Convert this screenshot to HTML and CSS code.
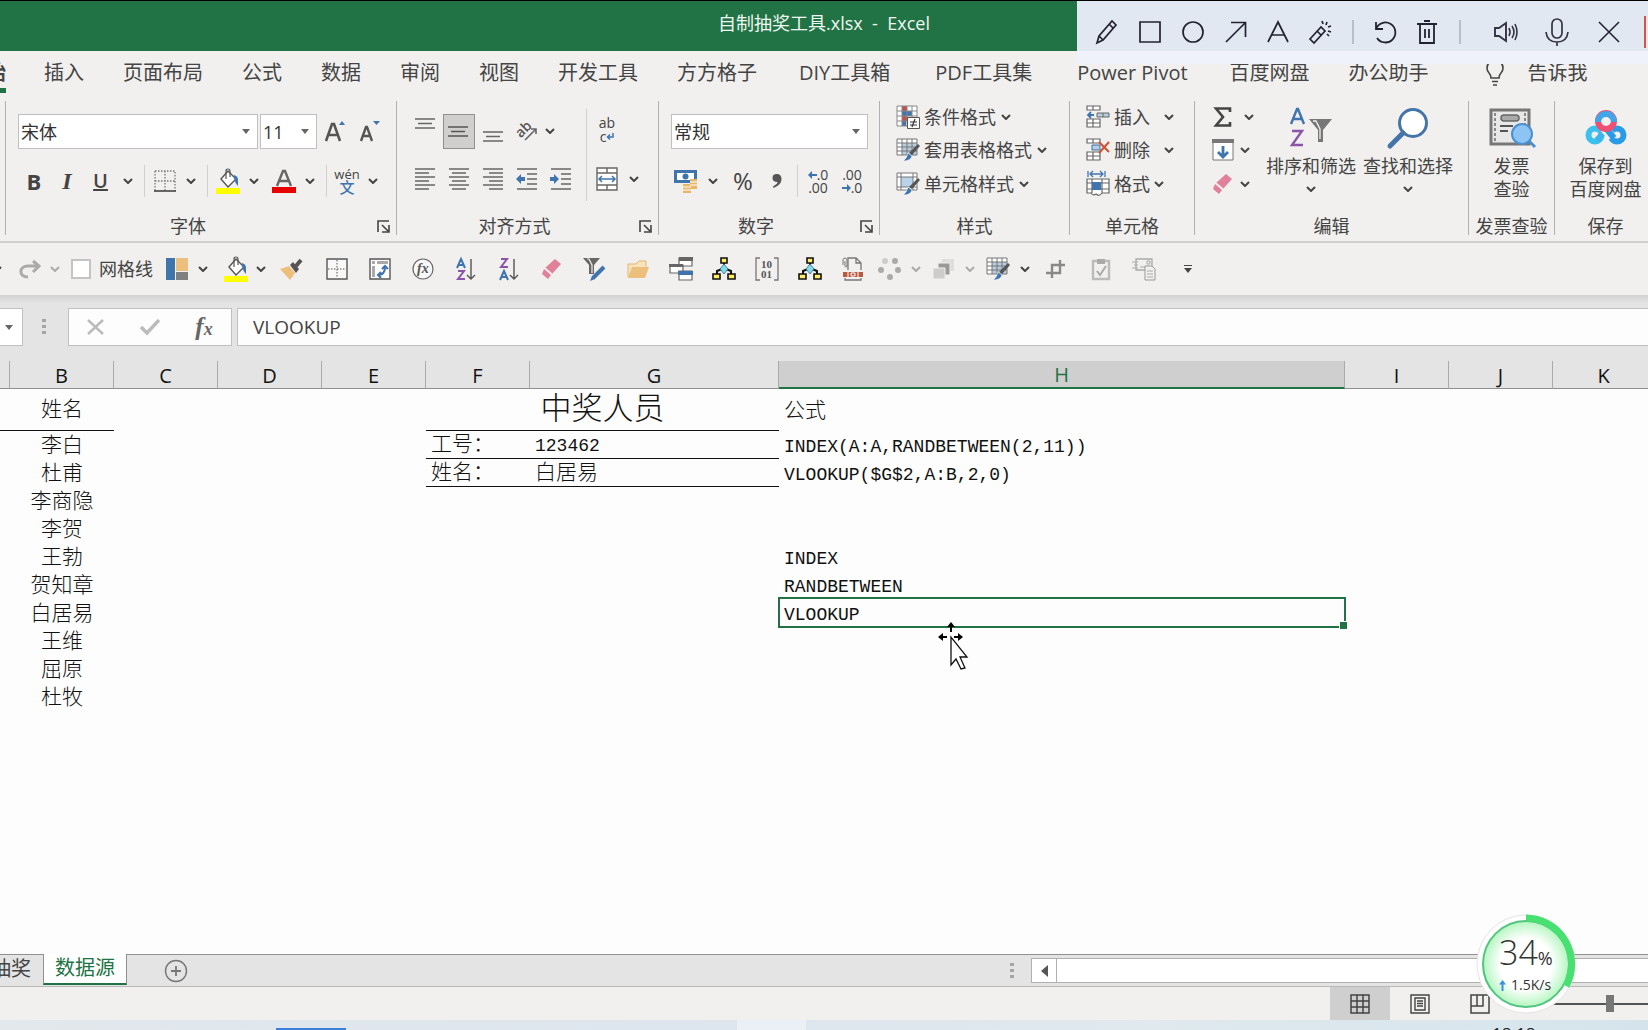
FILE: index.html
```
<!DOCTYPE html>
<html lang="zh-CN">
<head>
<meta charset="utf-8">
<title>自制抽奖工具.xlsx - Excel</title>
<link rel="stylesheet" href="styles.css">
</head>
<body>
<svg class="sprite" aria-hidden="true">
  <symbol id="chev" viewBox="0 0 10 6"><path d="M1 1l4 4 4-4" fill="none" stroke="currentColor" stroke-width="2"/></symbol>
  <symbol id="tri" viewBox="0 0 8 5"><path d="M0 0h8L4 5z" fill="#666"/></symbol>
  <symbol id="launch" viewBox="0 0 14 14"><path d="M1 12V1h11M5 5l6 6M12 5v7H5" fill="none" stroke="#444" stroke-width="1.6"/></symbol>
  <symbol id="bucket" viewBox="0 0 24 26"><path d="M5 11l7-8 8 8-8 8z" fill="#fff" stroke="#555" stroke-width="1.4"/><path d="M10 11V3q0-2 2-2t2 2v6" fill="none" stroke="#555" stroke-width="1.2"/><path d="M18 7q4 1 4 5v6q-3-3-4-8z" fill="#3f74ad"/><path d="M0 20h24v6H0z" fill="#ff0"/></symbol>
  <symbol id="eraser" viewBox="0 0 22 22"><path d="M14 1l6 5-9 10-7-6z" fill="#e0809a"/><path d="M3 11l7 6-3 4-6-5z" fill="#e0809a"/><path d="M4 10l7 6" stroke="#f1f0ef" stroke-width="1.2"/></symbol>
  <symbol id="tablebrush" viewBox="0 0 24 24"><path d="M1 1h20v16H1z" fill="#fff"/><path d="M6 5h15v12H6z" fill="#b9cde0"/><path d="M1 1h20v16H1zM1 5h20M1 9h20M1 13h20M6 1v16M11 1v16M16 1v16" fill="none" stroke="#777"/><path d="M22 6l2 2-8 9-3-2z" fill="#555"/><path d="M12 15l4 3q-1 5-9 5 4-3 5-8z" fill="#3f74ad" stroke="#fff" stroke-width=".6"/></symbol>
  <symbol id="cellbrush" viewBox="0 0 24 24"><path d="M1 1h20v17H1z" fill="#fff"/><path d="M5 5h12v10H5z" fill="#b9d3e8"/><path d="M1 1h20v17H1zM1 5h20M1 15h20M5 1v17M17 1v17" fill="none" stroke="#777"/><path d="M22 6l2 2-8 9-3-2z" fill="#555"/><path d="M12 15l4 3q-1 5-9 5 4-3 5-8z" fill="#3f74ad" stroke="#fff" stroke-width=".6"/></symbol>
  <symbol id="tree" viewBox="0 0 24 24"><path d="M12 5v6M5 17v-3l5-2M19 17v-3l-5-2" fill="none" stroke="#111" stroke-width="2"/><path d="M9 1h6v5H9zM1 17h7v5H1zM16 17h7v5h-7z" fill="#ffef60" stroke="#111" stroke-width="1.6"/><path d="M12 7l4 5-4 5-4-5z" fill="#7cdde8" stroke="#468" stroke-width=".8"/></symbol>
  <symbol id="outdent" viewBox="0 0 22 22"><path d="M1 1h20M11 6h10M11 11h10M11 16h10M1 21h20" stroke="#666" stroke-width="1.4"/><path d="M0 11l5-5v3h4v4H5v3z" fill="#3f74ad"/></symbol>
  <symbol id="indent" viewBox="0 0 22 22"><path d="M1 1h20M11 6h10M11 11h10M11 16h10M1 21h20" stroke="#666" stroke-width="1.4"/><path d="M9 11L4 6v3H0v4h4v3z" fill="#3f74ad"/></symbol>
</svg>

<header class="titlebar"><h1>自制抽奖工具.xlsx&nbsp; -&nbsp; Excel</h1></header>

<nav class="tabs">
  <a class="active" href="#home"><span>开始</span></a>
  <a href="#insert">插入</a><a href="#layout">页面布局</a><a href="#formulas">公式</a><a href="#data">数据</a><a href="#review">审阅</a><a href="#view">视图</a><a href="#dev">开发工具</a><a href="#ffgz">方方格子</a><a class="addin" href="#diy">DIY工具箱</a><a class="addin" href="#pdf">PDF工具集</a><a class="addin" href="#pivot">Power Pivot</a><a href="#pan">百度网盘</a><a href="#office">办公助手</a>
  <a class="tell" href="#tell"><svg width="18" height="26" viewBox="0 0 18 26"><path d="M5 18q0-3-2-5-2-2-2-5a8 8 0 0 1 16 0q0 3-2 5-2 2-2 5zM6 21.500h6M7 25h4" fill="none" stroke="#444" stroke-width="1.600"/></svg><span>告诉我</span></a>
</nav>

<section class="ribbon">
  <div class="group g-font">
    <div class="row font-top">
      <div class="combo"><select aria-label="字体"><option>宋体</option></select><svg width="8" height="5"><use href="#tri"/></svg></div>
      <div class="combo"><select aria-label="字号"><option>11</option></select><svg width="8" height="5"><use href="#tri"/></svg></div>
      <button aria-label="增大字号"><svg width="22" height="24" viewBox="0 0 22 24"><path d="M1 21L7 4h2l6 17M4 15h9" fill="none" stroke="#555" stroke-width="2.600"/><path d="M14 5l3-4 3 4z" fill="#3f74ad"/></svg></button>
      <button aria-label="减小字号"><svg width="22" height="24" viewBox="0 0 22 24"><path d="M1 21L6 7h1l5 14M3 16h7" fill="none" stroke="#555" stroke-width="2.400"/><path d="M13 1h7l-3.500 4z" fill="#3f74ad"/></svg></button>
    </div>
    <div class="row font-low">
      <button class="b">B</button><button class="i">I</button><button class="u">U</button><button class="c" aria-label="下划线选项"><svg width="10" height="6"><use href="#chev"/></svg></button><i class="bar"></i>
      <button aria-label="边框"><svg width="22" height="22" viewBox="0 0 22 22"><path d="M1 1h20v20M1 1v20M11 1v20M1 11h20" fill="none" stroke="#777" stroke-width="1.300" stroke-dasharray="1.500 1.500"/><path d="M0 21h22" stroke="#444" stroke-width="1.600"/></svg></button><button class="c" aria-label="边框选项"><svg width="10" height="6"><use href="#chev"/></svg></button><i class="bar"></i>
      <button aria-label="填充颜色"><svg width="24" height="26"><use href="#bucket"/></svg></button><button class="c" aria-label="填充选项"><svg width="10" height="6"><use href="#chev"/></svg></button>
      <button aria-label="字体颜色"><svg width="24" height="24" viewBox="0 0 24 24"><path d="M5 17l6-15h2l6 15M8 12h8" fill="none" stroke="#666" stroke-width="2.400"/><path d="M0 18h24v6H0z" fill="#e60000"/></svg></button><button class="c" aria-label="字体颜色选项"><svg width="10" height="6"><use href="#chev"/></svg></button><i class="bar"></i>
      <button class="wen"><span>wén</span><b>文</b></button><button class="c" aria-label="拼音选项"><svg width="10" height="6"><use href="#chev"/></svg></button>
    </div>
    <footer><span>字体</span><button aria-label="字体设置"><svg width="14" height="14"><use href="#launch"/></svg></button></footer>
  </div>

  <div class="group g-align">
    <div class="split">
      <div class="five">
        <button aria-label="顶端对齐" class="top"><svg width="20" height="12" viewBox="0 0 20 12"><path d="M0 1h20M3 5.500h14M0 10h20" stroke="#666" stroke-width="1.400"/></svg></button>
        <button aria-label="垂直居中" class="on"><svg width="20" height="12" viewBox="0 0 20 12"><path d="M0 1h20M3 5.500h14M0 10h20" stroke="#555" stroke-width="1.400"/></svg></button>
        <button aria-label="底端对齐" class="bottom"><svg width="20" height="12" viewBox="0 0 20 12"><path d="M0 1h20M3 5.500h14M0 10h20" stroke="#666" stroke-width="1.400"/></svg></button>
        <button aria-label="方向"><svg width="22" height="22" viewBox="0 0 22 22"><g transform="rotate(-45 9 10)"><text x="0" y="13" class="glyph ab">ab</text></g><path d="M9 20L20 9M15 9h5v5" fill="none" stroke="#666" stroke-width="1.600"/></svg></button>
        <button class="start" aria-label="方向选项"><svg width="10" height="6"><use href="#chev"/></svg></button>
        <button aria-label="左对齐"><svg width="20" height="22" viewBox="0 0 20 22"><path d="M0 1h20M0 5h14M0 9h20M0 13h14M0 17h20M0 21h14" stroke="#666" stroke-width="1.400"/></svg></button>
        <button aria-label="居中"><svg width="20" height="22" viewBox="0 0 20 22"><path d="M0 1h20M3 5h14M0 9h20M3 13h14M0 17h20M3 21h14" stroke="#666" stroke-width="1.400"/></svg></button>
        <button aria-label="右对齐"><svg width="20" height="22" viewBox="0 0 20 22"><path d="M0 1h20M6 5h14M0 9h20M6 13h14M0 17h20M6 21h14" stroke="#666" stroke-width="1.400"/></svg></button>
        <button aria-label="减少缩进"><svg width="22" height="22"><use href="#outdent"/></svg></button>
        <button aria-label="增加缩进"><svg width="22" height="22"><use href="#indent"/></svg></button>
      </div>
      <div class="two">
        <button class="wrap" aria-label="自动换行"><span>ab</span><span>c<svg width="8" height="8" viewBox="0 0 8 8"><path d="M7 0v4H2M4 1.500L1.500 4 4 6.500" fill="none" stroke="#3f74ad" stroke-width="1.500"/></svg></span></button><span></span>
        <button aria-label="合并后居中"><svg width="22" height="24" viewBox="0 0 22 24"><path d="M1 1h20v22H1zM1 6h20M1 18h20M11 1v5M11 18v5" fill="#fff" stroke="#666" stroke-width="1.400"/><path d="M3 12h16M6 9l-3 3 3 3M16 9l3 3-3 3" fill="none" stroke="#3f74ad" stroke-width="1.500"/></svg></button>
        <button class="c" aria-label="合并选项"><svg width="10" height="6"><use href="#chev"/></svg></button>
      </div>
    </div>
    <footer><span>对齐方式</span><button aria-label="对齐设置"><svg width="14" height="14"><use href="#launch"/></svg></button></footer>
  </div>

  <div class="group g-num">
    <div class="row num-top"><div class="combo"><select aria-label="数字格式"><option>常规</option></select><svg width="8" height="5"><use href="#tri"/></svg></div></div>
    <div class="row num-low">
      <button aria-label="会计数字格式"><svg width="24" height="24" viewBox="0 0 24 24"><path d="M0 1h23v13H0z" fill="#3f74ad"/><path d="M3 4h17v7H3z" fill="#fff"/><circle cx="11.500" cy="7.500" r="3" fill="#3f74ad"/><path d="M16 10h7v10h-7zM9 15h8v9H9z" fill="#e7b66b"/><path d="M16 13h7M16 16h7M9 18h8M9 21h8" stroke="#fff"/></svg></button><button class="c" aria-label="货币选项"><svg width="10" height="6"><use href="#chev"/></svg></button>
      <button class="pct">%</button>
      <button aria-label="千位分隔"><svg width="12" height="16" viewBox="0 0 12 16"><path d="M5.500 1a4.500 4.500 0 0 1 5 5q0 6-8 9-1-1 0-2 4-2 4-4-5 0-5-4 0-4 4-4z" fill="#555"/></svg></button><i class="bar"></i>
      <button class="dec"><span><svg width="9" height="8" viewBox="0 0 9 8"><path d="M0 4l4-4v3h5v2H4v3z" fill="#3f74ad"/></svg>.0</span><span>.00</span></button>
      <button class="dec"><span>.00</span><span><svg width="9" height="8" viewBox="0 0 9 8"><path d="M9 4L5 0v3H0v2h5v3z" fill="#3f74ad"/></svg>.0</span></button>
    </div>
    <footer><span>数字</span><button aria-label="数字设置"><svg width="14" height="14"><use href="#launch"/></svg></button></footer>
  </div>

  <div class="group g-style">
    <div class="stack">
      <button><svg width="24" height="24" viewBox="0 0 24 24"><path d="M1 1h20v20H1z" fill="#fff"/><path d="M6 1h5v5H6zM6 11h5v5H6z" fill="#c0504d"/><path d="M6 6h10v5H6zM6 16h4v5H6z" fill="#3f74ad"/><path d="M1 1h20v20H1zM1 6h20M1 11h20M1 16h20M6 1v20M11 1v20M16 1v20" fill="none" stroke="#888"/><path d="M11.500 12.500h12v11h-12z" fill="#fff" stroke="#555"/><path d="M14 17h7M14 20h7M19 14l-3 8" stroke="#333" stroke-width="1.200"/></svg><span>条件格式</span><svg width="10" height="6"><use href="#chev"/></svg></button>
      <button><svg width="24" height="24"><use href="#tablebrush"/></svg><span>套用表格格式</span><svg width="10" height="6"><use href="#chev"/></svg></button>
      <button><svg width="24" height="24"><use href="#cellbrush"/></svg><span>单元格样式</span><svg width="10" height="6"><use href="#chev"/></svg></button>
    </div>
    <footer><span>样式</span></footer>
  </div>

  <div class="group g-cells">
    <div class="stack">
      <button><svg width="24" height="24" viewBox="0 0 24 24"><path d="M1 1h13v4H1zM7 1v4M1 14h13v8H1zM1 18h13M7 14v8" fill="#fff" stroke="#666" stroke-width="1.200"/><path d="M11 8h12v4H11zM17 8v4" fill="#b9cde0" stroke="#666"/><path d="M8 10H2M5 7l-3 3 3 3" fill="none" stroke="#3f74ad" stroke-width="1.800"/></svg><span>插入</span><svg class="far" width="10" height="6"><use href="#chev"/></svg></button>
      <button><svg width="24" height="24" viewBox="0 0 24 24"><path d="M1 1h13v4H1zM7 1v4M1 14h13v8H1zM1 18h13M7 14v8" fill="#fff" stroke="#666" stroke-width="1.200"/><path d="M6 7h8v5H6z" fill="#b9cde0" stroke="#3f74ad"/><path d="M13 4l10 10M23 4L13 15" stroke="#d05030" stroke-width="2"/></svg><span>删除</span><svg class="far" width="10" height="6"><use href="#chev"/></svg></button>
      <button><svg width="24" height="26" viewBox="0 0 24 26"><path d="M2 0v6M19 0v6M4 3h13M7 0L4 3l3 3M14 0l3 3-3 3" fill="none" stroke="#3f74ad" stroke-width="1.300"/><path d="M1 8h22v14h-7q-3 4-6 1-3 2-5-1H1zM1 12h22M1 18h22M6 8v14M16 8v14" fill="#fff" stroke="#666" stroke-width="1.200"/><path d="M6 11h9v8H6z" fill="#3f74ad"/></svg><span>格式</span><svg width="10" height="6"><use href="#chev"/></svg></button>
    </div>
    <footer><span>单元格</span></footer>
  </div>

  <div class="group g-edit">
    <div class="edit-body">
      <div class="stack">
        <button><svg width="22" height="20" viewBox="0 0 22 20"><path d="M18 5V1.500H4l7 8.500-7 8.500h14V15" fill="none" stroke="#444" stroke-width="2.600"/></svg><svg class="far" width="10" height="6"><use href="#chev"/></svg></button>
        <button><svg width="22" height="22" viewBox="0 0 22 22"><path d="M1 1h20v20H1z" fill="#fff" stroke="#777"/><path d="M0 0h22v4H0z" fill="#777"/><path d="M11 7v11M6 13l5 5 5-5" fill="none" stroke="#3f74ad" stroke-width="2.800"/></svg><svg width="10" height="6"><use href="#chev"/></svg></button>
        <button><svg width="22" height="22"><use href="#eraser"/></svg><svg width="10" height="6"><use href="#chev"/></svg></button>
      </div>
      <button class="big"><svg width="44" height="42" viewBox="0 0 44 42"><path d="M2 17L8 2h1l6 15M4 12h9" fill="none" stroke="#3f74ad" stroke-width="2.400"/><path d="M3 24h10L3 38h11" fill="none" stroke="#8a55a8" stroke-width="2.400"/><path d="M20 12h23L34 23v12h-5V23z" fill="#777"/><path d="M24 14h3l4 8v10" fill="none" stroke="#f1f0ef" stroke-width="1.300"/></svg><span>排序和筛选</span><svg width="10" height="6"><use href="#chev"/></svg></button>
      <button class="big"><svg width="42" height="42" viewBox="0 0 42 42"><circle cx="26" cy="16" r="13.500" fill="#fff" stroke="#4474a8" stroke-width="3"/><path d="M16 26L3 39" stroke="#4474a8" stroke-width="5" stroke-linecap="round"/></svg><span>查找和选择</span><svg width="10" height="6"><use href="#chev"/></svg></button>
    </div>
    <footer><span>编辑</span></footer>
  </div>

  <div class="group g-inv">
    <button class="big"><svg width="46" height="42" viewBox="0 0 46 42"><path d="M2 3h38v34H2z" fill="#e8e8e8" stroke="#777" stroke-width="3"/><path d="M6 6v28M36 6v14" stroke="#888" stroke-width="2" stroke-dasharray="3 2"/><rect x="12" y="8" width="18" height="6" rx="3" fill="#aaa" stroke="#666" stroke-width="1.500"/><path d="M11 19h13M11 24h8" stroke="#555" stroke-width="2"/><circle cx="33" cy="27" r="10" fill="#8cc4f4" stroke="#4c8fd0" stroke-width="2"/><path d="M40 34l6 6" stroke="#4c8fd0" stroke-width="3"/></svg><span>发票<br>查验</span></button>
    <footer><span>发票查验</span></footer>
  </div>

  <div class="group g-save">
    <button class="big"><svg width="42" height="42" viewBox="0 0 42 42"><circle cx="10" cy="28" r="6.500" fill="none" stroke="#3cc0ee" stroke-width="6"/><circle cx="32" cy="28" r="6.500" fill="none" stroke="#2a9be6" stroke-width="6"/><path d="M24 20l-12 13" stroke="#3cb4ec" stroke-width="6"/><path d="M19 21l8 9" stroke="#f1f0ef" stroke-width="9"/><path d="M20 20l9 11" stroke="#2a9be6" stroke-width="6"/><circle cx="21" cy="14" r="8" fill="#f1f0ef" stroke="#ee4f72" stroke-width="6"/><path d="M13 15a8 8 0 0 1 16 0" fill="none" stroke="#42a5e8" stroke-width="6"/></svg><span>保存到<br>百度网盘</span></button>
    <footer><span>保存</span></footer>
  </div>
</section>

<section class="qat">
  <button class="c edge" aria-label="撤消选项"><svg width="10" height="6"><use href="#chev"/></svg></button>
  <button aria-label="恢复"><svg width="22" height="20" viewBox="0 0 22 20"><path d="M9 18C-1 18 0 7 9 7h11M14 2l6 5-6 6" fill="none" stroke="#aaa" stroke-width="3"/></svg></button>
  <button class="c off" aria-label="恢复选项"><svg width="10" height="6"><use href="#chev"/></svg></button>
  <label class="check"><input type="checkbox">网格线</label>
  <button aria-label="主题颜色"><svg width="22" height="22" viewBox="0 0 22 22"><path d="M0 0h9v22H0z" fill="#3f74ad"/><path d="M10 0h12v13H10z" fill="#ecc07c"/><path d="M10 14h12v8H10z" fill="#808080"/></svg></button>
  <button class="c" aria-label="主题选项"><svg width="10" height="6"><use href="#chev"/></svg></button>
  <button aria-label="填充颜色"><svg width="24" height="26"><use href="#bucket"/></svg></button>
  <button class="c" aria-label="填充颜色选项"><svg width="10" height="6"><use href="#chev"/></svg></button>
  <button aria-label="格式刷"><svg width="24" height="22" viewBox="0 0 24 22"><path d="M1 11l9-3 6 7-5 7z" fill="#ecc07c"/><path d="M11 7l3-3 6 7-3 4z" fill="#555"/><path d="M17 8l5-6" stroke="#555" stroke-width="4"/></svg></button>
  <button aria-label="边框"><svg width="22" height="22" viewBox="0 0 22 22"><path d="M1 1h20v20H1z" fill="#f8f8f8" stroke="#555" stroke-width="1.400"/><path d="M11 2v18M2 11h18" stroke="#555" stroke-dasharray="1.500 1.500"/></svg></button>
  <button aria-label="数据透视表"><svg width="22" height="22" viewBox="0 0 22 22"><path d="M1 1h20v20H1z" fill="#fff" stroke="#555" stroke-width="1.400"/><path d="M3 3h3v3H3zM8 3h11v3H8zM3 8h3v11H3z" fill="#aaa"/><path d="M9 17q7 0 7-8M13 11l3-3 3 3M12 14l-3 3 3 3" fill="none" stroke="#3f74ad" stroke-width="2"/></svg></button>
  <button aria-label="插入函数"><svg width="22" height="22" viewBox="0 0 22 22"><circle cx="11" cy="11" r="10" fill="#f8f8f8" stroke="#666" stroke-width="1.200"/><text x="5" y="15" class="glyph fx">fx</text></svg></button>
  <button aria-label="升序"><svg width="20" height="22" viewBox="0 0 20 22"><path d="M1 10l4-9 4 9M2 7h6" fill="none" stroke="#3f74ad" stroke-width="2"/><path d="M2 13h6l-6 8h7" fill="none" stroke="#8a55a8" stroke-width="2"/><path d="M15 1v20M11 17l4 4 4-4" fill="none" stroke="#555" stroke-width="1.400"/></svg></button>
  <button aria-label="降序"><svg width="20" height="22" viewBox="0 0 20 22"><path d="M1 22l4-9 4 9M2 19h6" fill="none" stroke="#3f74ad" stroke-width="2"/><path d="M2 1h6L2 9h7" fill="none" stroke="#8a55a8" stroke-width="2"/><path d="M15 1v20M11 17l4 4 4-4" fill="none" stroke="#555" stroke-width="1.400"/></svg></button>
  <button aria-label="清除"><svg width="22" height="22"><use href="#eraser"/></svg></button>
  <button aria-label="筛选"><svg width="24" height="24" viewBox="0 0 24 24"><path d="M0 1h17l-6 7v9H6V8z" fill="#666"/><path d="M4 2h2l3 6v8" fill="none" stroke="#f1f0ef" stroke-width="1.200"/><path d="M21 10L10 21" stroke="#3f74ad" stroke-width="4"/><path d="M9 19l3 3-5 2z" fill="#3f74ad"/></svg></button>
  <button aria-label="打开"><svg width="22" height="20" viewBox="0 0 22 20"><path d="M1 18V5h8l3-3h7v6" fill="#f7e3bd" stroke="#e2b76a"/><path d="M5 8h17l-4 11H1z" fill="#ecc07c"/></svg></button>
  <button aria-label="切换窗口"><svg width="24" height="24" viewBox="0 0 24 24"><path d="M10 1h13v8H10zM1 8h13v8H1zM10 14h13v9H10z" fill="#fff" stroke="#666" stroke-width="1.200"/><path d="M10 0h14v4H10zM0 7h14v3H0z" fill="#666"/><path d="M9 14h15v4H9z" fill="#3f74ad"/></svg></button>
  <button aria-label="结构图"><svg width="24" height="24"><use href="#tree"/></svg></button>
  <button aria-label="数组"><svg width="24" height="24" viewBox="0 0 24 24"><path d="M5 1H1v22h4M19 1h4v22h-4" fill="none" stroke="#777" stroke-width="1.300"/><text x="6" y="11" class="glyph num">10</text><text x="6" y="21" class="glyph num">01</text></svg></button>
  <button aria-label="关系图"><svg width="24" height="24"><use href="#tree"/></svg></button>
  <button aria-label="链接"><svg width="22" height="24" viewBox="0 0 22 24"><path d="M6 13V1h8l5 5v7M14 1v5h5M3 21v2h16v-2" fill="none" stroke="#777" stroke-width="1.300"/><path d="M1 8V3q0-2 2-2t2 2v6q0 1-1 1t-1-1V4" fill="#f1f0ef" stroke="#777"/><path d="M1 15h20v5H1z" fill="#b85a40"/><path d="M6 15v5M16 15v5M9 16h4v3H9z" fill="none" stroke="#fff"/></svg></button>
  <button aria-label="动画"><svg width="24" height="24" viewBox="0 0 24 24"><g fill="#aaa"><circle cx="7" cy="4" r="3" opacity=".5"/><circle cx="17" cy="4" r="3"/><circle cx="3" cy="13" r="3"/><circle cx="20" cy="13" r="3"/><circle cx="12" cy="20" r="3"/></g></svg></button>
  <button class="c off" aria-label="动画选项"><svg width="10" height="6"><use href="#chev"/></svg></button>
  <button aria-label="叠放"><svg width="22" height="22" viewBox="0 0 22 22"><path d="M9 1h12v12H9z" fill="#ddd"/><path d="M5 5h12v12H5z" fill="#999" stroke="#f1f0ef"/><path d="M0 10h12v11H0z" fill="#ccc" stroke="#f1f0ef"/></svg></button>
  <button class="c off" aria-label="叠放选项"><svg width="10" height="6"><use href="#chev"/></svg></button>
  <button aria-label="套用表格格式"><svg width="24" height="24"><use href="#tablebrush"/></svg></button>
  <button class="c" aria-label="表格格式选项"><svg width="10" height="6"><use href="#chev"/></svg></button>
  <button aria-label="裁剪"><svg width="20" height="20" viewBox="0 0 20 20"><path d="M6 19V6h12M2 14h12V1M0 14h6M14 6h5" fill="none" stroke="#888" stroke-width="2.400"/></svg></button>
  <button aria-label="检查"><svg width="20" height="24" viewBox="0 0 20 24"><path d="M2 4h16v18H2z" fill="none" stroke="#bbb" stroke-width="2.400"/><path d="M6 2h8v5H6z" fill="#aaa"/><path d="M6 14l3 4 6-9" fill="none" stroke="#aaa" stroke-width="2"/></svg></button>
  <button aria-label="邮件"><svg width="24" height="24" viewBox="0 0 24 24"><path d="M4 2h16v11H4z" fill="none" stroke="#aaa" stroke-width="1.300"/><path d="M15 4h3v3h-3zM8 10h5M0 5h6M2 8h4M0 11h6" fill="none" stroke="#aaa"/><path d="M13 9h7l3 3v11H13z" fill="#f1f0ef" stroke="#999"/><path d="M15 14h6M15 17h6M15 20h6" stroke="#aaa"/></svg></button>
  <button aria-label="自定义快速访问工具栏"><svg width="8" height="8" viewBox="0 0 8 8"><path d="M0 .5h8" stroke="#444"/><path d="M0 3h8L4 8z" fill="#444"/></svg></button>
</section>

<section class="formulabar">
  <button class="namebox" aria-label="名称框"><svg width="8" height="5"><use href="#tri"/></svg></button>
  <i class="grip"></i>
  <div class="fbuttons">
    <button aria-label="取消"><svg width="18" height="18" viewBox="0 0 18 18"><path d="M1 2l15 14M16 2L1 16" stroke="#bbb" stroke-width="2.400"/></svg></button>
    <button aria-label="输入"><svg width="20" height="16" viewBox="0 0 20 16"><path d="M1 8l6 6L19 1" fill="none" stroke="#bbb" stroke-width="3.400"/></svg></button>
    <button class="fxbtn">f<small>x</small></button>
  </div>
  <input type="text" value="VLOOKUP" aria-label="编辑栏">
</section>

<main class="sheet">
<table>
  <colgroup><col class="ca"><col class="cn"><col class="cn"><col class="cn"><col class="cn"><col class="cn"><col class="cg"><col class="ch"><col class="cn"><col class="cn"><col></colgroup>
  <thead><tr><th></th><th>B</th><th>C</th><th>D</th><th>E</th><th>F</th><th>G</th><th class="sel">H</th><th>I</th><th>J</th><th class="last">K</th></tr></thead>
  <tbody>
    <tr class="first"><td class="ln"></td><td class="ctr ln">姓名</td><td></td><td></td><td></td><td class="ttl ln" colspan="2">中奖人员</td><td>公式</td><td></td><td></td><td></td></tr>
    <tr><td></td><td class="ctr">李白</td><td></td><td></td><td></td><td class="ln">工号：</td><td class="ln num">123462</td><td>INDEX(A:A,RANDBETWEEN(2,11))</td></tr>
    <tr><td></td><td class="ctr">杜甫</td><td></td><td></td><td></td><td class="ln">姓名：</td><td class="ln">白居易</td><td>VLOOKUP($G$2,A:B,2,0)</td></tr>
    <tr><td></td><td class="ctr">李商隐</td></tr>
    <tr><td></td><td class="ctr">李贺</td></tr>
    <tr><td></td><td class="ctr">王勃</td><td></td><td></td><td></td><td></td><td></td><td>INDEX</td></tr>
    <tr><td></td><td class="ctr">贺知章</td><td></td><td></td><td></td><td></td><td></td><td>RANDBETWEEN</td></tr>
    <tr><td></td><td class="ctr">白居易</td><td></td><td></td><td></td><td></td><td></td><td class="picked">VLOOKUP<svg class="cursor" width="30" height="52" viewBox="0 0 30 52"><path d="M13 0l4 5h-3v5h-2V5H9zM0 15l5-4v3h4v2H5v3zM25 15l-5-4v3h-4v2h4v3z" fill="#000"/><path d="M13 15v28l5-6 5 10 4-1-5-11h7z" fill="#fff" stroke="#111" stroke-width="1.300"/></svg></td></tr>
    <tr><td></td><td class="ctr">王维</td></tr>
    <tr><td></td><td class="ctr">屈原</td></tr>
    <tr><td></td><td class="ctr">杜牧</td></tr>
  </tbody>
</table>
</main>

<nav class="sheets">
  <a class="tab cut" href="#draw"><span>抽奖</span></a><a class="tab cur" href="#source">数据源</a>
  <button class="add" aria-label="新工作表"><svg width="24" height="24" viewBox="0 0 24 24"><circle cx="12" cy="12" r="10.500" fill="none" stroke="#777" stroke-width="1.400"/><path d="M7 12h10M12 7v10" stroke="#777" stroke-width="1.800"/></svg></button>
  <i class="grip"></i>
  <div class="scroll"><button aria-label="向左滚动"><svg width="7" height="12" viewBox="0 0 7 12"><path d="M7 0v12L0 6z" fill="#555"/></svg></button></div>
</nav>

<footer class="status">
  <button class="on" aria-label="普通"><svg width="20" height="20" viewBox="0 0 20 20"><path d="M1 1h18v18H1zM1 7h18M1 13h18M7 1v18M13 1v18" fill="none" stroke="#444" stroke-width="1.500"/></svg></button>
  <button aria-label="页面布局视图"><svg width="20" height="20" viewBox="0 0 20 20"><path d="M1 1h18v18H1zM5 4h10v12H5zM7 7h6M7 9.500h6M7 12h6" fill="none" stroke="#444" stroke-width="1.400"/></svg></button>
  <button aria-label="分页预览"><svg width="20" height="20" viewBox="0 0 20 20"><path d="M1 1h18v18H1zM1 12h12V1M7 1v11" fill="none" stroke="#444" stroke-width="1.500"/></svg></button>
  <input type="range" min="0" max="100" value="76" aria-label="缩放">
</footer>
<div class="taskbar"><i class="app"></i><i class="app2"></i><span>18:18</span></div>

<div class="tools">
  <button aria-label="画笔"><svg width="22" height="24" viewBox="0 0 22 24"><path d="M1 23l2-7L16 1l4 4L7 20zM3 16l4 4M13 4l4 4" fill="none" stroke="#223" stroke-width="1.700"/></svg></button>
  <button aria-label="矩形"><svg width="22" height="22" viewBox="0 0 22 22"><path d="M1 1h20v20H1z" fill="none" stroke="#223" stroke-width="1.700"/></svg></button>
  <button aria-label="圆形"><svg width="22" height="22" viewBox="0 0 22 22"><circle cx="11" cy="11" r="10" fill="none" stroke="#223" stroke-width="1.700"/></svg></button>
  <button aria-label="箭头"><svg width="22" height="22" viewBox="0 0 22 22"><path d="M1 21L20 2M6 1.500h14.500V16" fill="none" stroke="#223" stroke-width="1.700"/></svg></button>
  <button aria-label="文字"><svg width="22" height="22" viewBox="0 0 22 22"><path d="M1 21L11 1l10 20M5 14h12" fill="none" stroke="#223" stroke-width="1.700"/></svg></button>
  <button aria-label="魔棒"><svg width="24" height="24" viewBox="0 0 24 24"><path d="M1 19L12 7l4 4L5 23zM8 11l4 4M13 1l1 3M18 2l-1 3M22 6l-3 1M19 11l3 1M18 14l2 2" fill="none" stroke="#223" stroke-width="1.700"/></svg></button>
  <i class="rule"></i>
  <button aria-label="撤销"><svg width="22" height="24" viewBox="0 0 22 24"><path d="M2 2v7h7M2 9a10 10 0 1 1 1 9" fill="none" stroke="#223" stroke-width="1.800"/></svg></button>
  <button aria-label="删除"><svg width="20" height="24" viewBox="0 0 20 24"><path d="M0 4h20M3 4v19h14V4M7 1h6M8 9v9M12 9v9" fill="none" stroke="#223" stroke-width="1.800"/></svg></button>
  <i class="rule"></i>
  <button aria-label="声音"><svg width="26" height="26" viewBox="0 0 26 26"><path d="M2 9h4l7-5v18l-7-5H2z" fill="none" stroke="#334" stroke-width="1.900"/><path d="M16 9q2 4 0 8M19 7q4 6 0 12M22 5q4 8 0 16" fill="none" stroke="#334" stroke-width="1.600"/></svg></button>
  <button aria-label="麦克风"><svg width="24" height="28" viewBox="0 0 24 28"><rect x="7" y="1" width="10" height="19" rx="5" fill="none" stroke="#334" stroke-width="1.700"/><path d="M1 14q1 10 11 10t11-10M12 24v4" fill="none" stroke="#334" stroke-width="1.700"/></svg></button>
  <button aria-label="关闭"><svg width="22" height="22" viewBox="0 0 22 22"><path d="M1 1l20 20M21 1L1 21" stroke="#223" stroke-width="1.600"/></svg></button>
  <i class="red"></i>
</div>

<aside class="meter">
  <svg width="102" height="102" viewBox="0 0 102 102"><defs><radialGradient id="mg"><stop offset=".6" stop-color="#fff"/><stop offset="1" stop-color="#b4f6c0"/></radialGradient></defs><circle cx="51" cy="51" r="49" fill="#fff" stroke="#e4e4e4"/><circle cx="51" cy="51" r="43" fill="url(#mg)" stroke="#52c480" stroke-width="2"/><path d="M51 5a46 46 0 0 1 40 68" fill="none" stroke="#48e070" stroke-width="7"/></svg>
  <div><p class="pc">34<small>%</small></p><p class="rate"><svg width="7" height="11" viewBox="0 0 7 11"><path d="M3.500 0L7 4.500H4.500V11h-2V4.500H0z" fill="#3d8fe0"/></svg>1.5K/s</p></div>
</aside>
</body>
</html>
```
FILE: styles.css
```
* { box-sizing: border-box; }
body {
  margin: 0;
  min-height: 100vh;
  position: relative;
  display: flex;
  flex-direction: column;
  overflow: hidden;
  background: #fdfdfd;
  color: #444;
  font: 18px/24px "Open Sans", "Noto Sans CJK SC", sans-serif;
}
button, input, select { font: inherit; color: inherit; margin: 0; padding: 0; border: 0; background: none; border-radius: 0; }
button { display: flex; align-items: center; justify-content: center; white-space: nowrap; }
a { color: inherit; text-decoration: none; white-space: nowrap; }
svg { display: block; flex: none; overflow: visible; }
.sprite { position: absolute; width: 0; height: 0; }
.glyph { font-size: 13px; fill: #555; }
.glyph.ab { font-size: 14px; font-weight: 600; }
.glyph.fx { font: italic bold 14px "Liberation Serif", serif; }
.glyph.num { font: bold 11px "Liberation Serif", serif; }

/* Title bar */
.titlebar { height: 51px; background: #217346; border-top: 1px solid #000; display: flex; justify-content: center; }
.titlebar h1 { margin: 0; padding-top: 9px; font-size: 18px; line-height: 26px; font-weight: 400; color: #eef6f0; white-space: nowrap; }

/* Ribbon tabs */
.tabs { height: 44px; background: #f1f0ef; display: flex; gap: 39px; font-size: 20px; line-height: 44px; }
.tabs .active { width: 6px; margin-right: -1px; display: flex; justify-content: flex-end; border-bottom: 5px solid #217346; height: 42px; font-weight: 700; overflow: hidden; }
.tabs .addin { padding: 0 3px; }
.tell { display: flex; align-items: center; gap: 24px; padding-left: 18px; }

/* Ribbon */
.ribbon { display: flex; height: 148px; padding: 6px 0 6px 5px; background: #f1f0ef; border-bottom: 2px solid #cfcfcf; }
.group { flex: none; border-left: 1px solid #b0b0b0; display: flex; flex-direction: column; }
.group footer { margin-top: auto; height: 17px; line-height: 17px; display: grid; grid-template-columns: 1fr 26px; align-items: center; text-align: center; white-space: nowrap; }
.group footer button { justify-content: flex-end; padding-right: 5px; }
.g-style footer, .g-cells footer, .g-edit footer, .g-inv footer, .g-save footer { display: block; }
.g-font { width: 391px; }
.g-align { width: 262px; }
.g-num { width: 221px; }
.g-style { width: 190px; }
.g-cells { width: 125px; }
.g-edit { width: 274px; }
.g-inv { width: 86px; }
.g-save { flex: 1 0 94px; }
.g-save .big, .g-save footer { width: 101px; }

.row { display: grid; align-items: center; }
.font-top, .num-top { padding: 13px 0 0 12px; height: 48px; }
.font-top { grid-template-columns: 240px 57px 33px 34px; column-gap: 2px; }
.num-top { grid-template-columns: 197px; }
.font-low { height: 64px; padding-left: 11px; grid-template-columns: 34px 32px 35px 20px 12px 30px 22px 10px 32px 20px 40px 12px 20px 22px 30px; }
.num-low { height: 64px; padding-left: 12px; grid-template-columns: 30px 24px 36px 32px 8px 34px 34px; }
.combo { height: 35px; border: 1px solid #c0c0c0; background: #fff; display: grid; grid-template-columns: 1fr 20px; align-items: center; }
.combo select { grid-area: 1 / 1 / 2 / 3; appearance: none; height: 33px; padding-left: 2px; color: #333; font-size: 18px; }
.combo svg { grid-area: 1 / 2; pointer-events: none; margin-left: 5px; }
.bar { width: 1px; height: 32px; background: #d0d0d0; justify-self: center; }
.b { font-size: 22px; font-weight: 700; }
.i { font: italic bold 24px "Liberation Serif", serif; }
.u { font-size: 20px; font-weight: 600; text-decoration: underline; }
.wen, .dec, .wrap { flex-direction: column; font-size: 14px; line-height: 14px; }
.wen { font-size: 13px; line-height: 12px; }
.wen b { font-weight: 500; font-size: 15px; line-height: 14px; color: #3f74ad; }
.dec { line-height: 13px; }
.dec span, .wrap span { display: flex; align-items: center; }
.pct { font-size: 24px; }
.split { display: flex; height: 112px; padding-left: 12px; }
.five { display: grid; grid-template: 34px 32px / repeat(5, 34px); row-gap: 15px; padding-top: 13px; width: 177px; }
.five .on { background: #d0cfce; border: 1px solid #909090; height: 35px; width: 32px; }
.five button { padding-right: 2px; }
.five .top { padding-bottom: 14px; }
.five .bottom { padding-top: 12px; }
.five .start { justify-content: flex-start; }
.two { border-left: 1px solid #d0d0d0; margin: 8px 0 12px; height: 92px; padding: 4px 0 0 3px; display: grid; grid-template: 34px 32px / 34px 20px; row-gap: 16px; }
.stack { display: grid; grid-template-rows: 32px 34px 34px; }
.stack button { justify-content: flex-start; gap: 4px; }
.g-style .stack { padding-left: 16px; }
.g-style .stack span { padding-right: 1px; }
.g-cells .stack { padding-left: 16px; }
.g-cells .far { margin-left: 10px; }
.edit-body { display: grid; grid-template-columns: 60px 96px 98px; padding-left: 8px; }
.edit-body .stack { padding-left: 9px; }
.edit-body .stack button { gap: 6px; }
.edit-body .far { margin-left: 4px; }
.big { flex-direction: column; justify-content: flex-start; line-height: 23px; }
.big > svg:first-child { margin: 6px 0 6px; }
.big > svg:last-child { margin-top: 8px; }

/* Quick access toolbar */
.qat {
  height: 52px; background: #f1f0ef; display: grid; align-items: center;
  grid-template-columns: 12px 36px 14px 102px 26px 26px 40px 10px 50px 42px repeat(12, 43px) 32px 20px 36px 16px 40px 14px 47px 43px 43px 45px;
}
.qat .edge { justify-content: flex-start; margin-left: -8px; }
.off { color: #aaa; }
.check { display: flex; align-items: center; gap: 8px; padding-left: 9px; white-space: nowrap; }
.check input { appearance: none; width: 20px; height: 20px; border: 2px solid #c4c4c4; background: #fff; }

/* Formula bar */
.formulabar { height: 66px; padding: 13px 0 15px; background: linear-gradient(#d2d2d2, #e4e4e4 8px); display: flex; }
.namebox { width: 23px; padding-right: 5px; border: 1px solid #c0c0c0; border-left: 0; background: #fff; }
.grip { width: 4px; height: 16px; align-self: center; background: repeating-linear-gradient(#a5a5a5 0 3px, transparent 3px 6px); }
.formulabar .grip { margin: 0 22px 0 19px; }
.fbuttons { width: 164px; margin-right: 5px; border: 1px solid #c0c0c0; background: #fdfdfd; display: grid; grid-template-columns: 54px 54px 54px; }
.fxbtn { font: italic bold 25px/28px "Liberation Serif", serif; color: #666; }
.fxbtn small { font-size: 18px; padding-top: 4px; }
.formulabar input { flex: 1; min-width: 0; border: 1px solid #c0c0c0; border-right: 0; background: #fdfdfd; padding-left: 15px; font-size: 19px; }

/* Sheet */
.sheet { flex: 1; }
table { width: 100%; table-layout: fixed; border-collapse: separate; border-spacing: 0; color: #111; font: 300 18px/24px "Liberation Mono", "Noto Sans CJK SC", monospace; }
.ca { width: 10px; }
.cn { width: 104px; }
.cg { width: 249px; }
.ch { width: 566px; }
th { height: 28px; padding: 2px 0 0; background: #e4e4e4; border-right: 1px solid #ababab; border-bottom: 1px solid #909090; font: 20px/25px "Open Sans", sans-serif; }
th.last { border-right: 0; padding-left: 6px; }
th.sel { background: #cfcfcf; border-bottom: 2px solid #217346; color: #217346; line-height: 24px; }
td { height: 28px; padding: 3px 0 0 5px; white-space: nowrap; position: relative; }
td.ctr, td.ttl { padding-left: 0; text-align: center; }
td.ctr, td.ln { font-size: 21px; }
td.ln { border-bottom: 1px solid #111; }
td.num { font-size: 18px; }
tr.first td { height: 42px; font-size: 21px; }
tr.first td.ttl { font-size: 31px; line-height: 36px; }
.picked::before { content: ""; position: absolute; inset: -2px -1px -1px; border: 2px solid #217346; }
.picked::after { content: ""; position: absolute; right: -2px; bottom: -2px; width: 7px; height: 7px; background: #217346; border: solid #fdfdfd; border-width: 1px 0 0 1px; }
.cursor { position: absolute; left: 159px; top: 23px; }

/* Sheet tabs */
.sheets { height: 33px; background: #e4e4e4; border-top: 1px solid #909090; border-bottom: 1px solid #b8b8b8; display: flex; font-size: 20px; line-height: 28px; }
.cut { width: 43px; padding-right: 12px; display: flex; justify-content: flex-end; overflow: hidden; }
.cur { height: 31px; margin-top: -1px; padding: 0 11px; background: #fff; color: #217346; border: solid #909090; border-width: 0 1px; border-bottom: 2px solid #217346; }
.add { margin-left: 37px; }
.sheets .grip { margin-left: auto; }
.scroll { margin: 3px 0 3px 17px; flex: 0 0 617px; border: 1px solid #b0b0b0; border-right: 0; background: #fff; display: flex; }
.scroll button { width: 25px; border-right: 1px solid #b0b0b0; }

/* Status bar */
.status { height: 33px; background: #f1f0ef; display: flex; justify-content: flex-end; }
.status button { width: 60px; }
.status .on { background: #cfcfcf; }
.status input { appearance: none; width: 150px; margin-left: -12px; background: linear-gradient(#555, #555) center / 100% 2px no-repeat; }
.status input::-webkit-slider-thumb { appearance: none; width: 8px; height: 17px; background: #777; }
.taskbar { height: 10px; background: linear-gradient(90deg, #e2e8ec, #dde5ee 40%, #dfe9ee 70%, #d5e4ec); display: grid; grid-template-columns: 276px 70px 391px 69px 686px 1fr; overflow: hidden; }
.app { grid-column: 2; margin-top: 8px; background: #3b7fd8; }
.app2 { grid-column: 4; background: #eaf0f6; }
.taskbar span { grid-column: 6; padding-top: 5px; font-size: 17px; line-height: 17px; color: #222; }

/* Floating annotation toolbar */
.tools { position: absolute; top: 1px; right: 0; height: 63px; width: 571px; padding: 0 0 2px 8px; background: linear-gradient(#e2e8f1 50px, #eff2fa 50px); display: grid; align-items: center; grid-template-columns: 43px 43px 43px 43px 42px 43px 22px 41px 44px 21px 71px 32px 71px 2px; }
.tools .rule { width: 2px; height: 24px; background: #b8bfca; justify-self: center; }
.tools .red { height: 32px; background: #d2544a; }

/* Network meter */
.meter { position: absolute; right: 71px; bottom: 15px; display: grid; color: #333; }
.meter > * { grid-area: 1 / 1; }
.meter p { margin: 0; }
.meter div { padding: 22px 0 0 24px; }
.pc { font-size: 34px; line-height: 34px; font-weight: 300; }
.pc small { font-size: 18px; font-weight: 400; }
.rate { display: flex; align-items: center; gap: 5px; font-size: 14px; line-height: 20px; }
```
